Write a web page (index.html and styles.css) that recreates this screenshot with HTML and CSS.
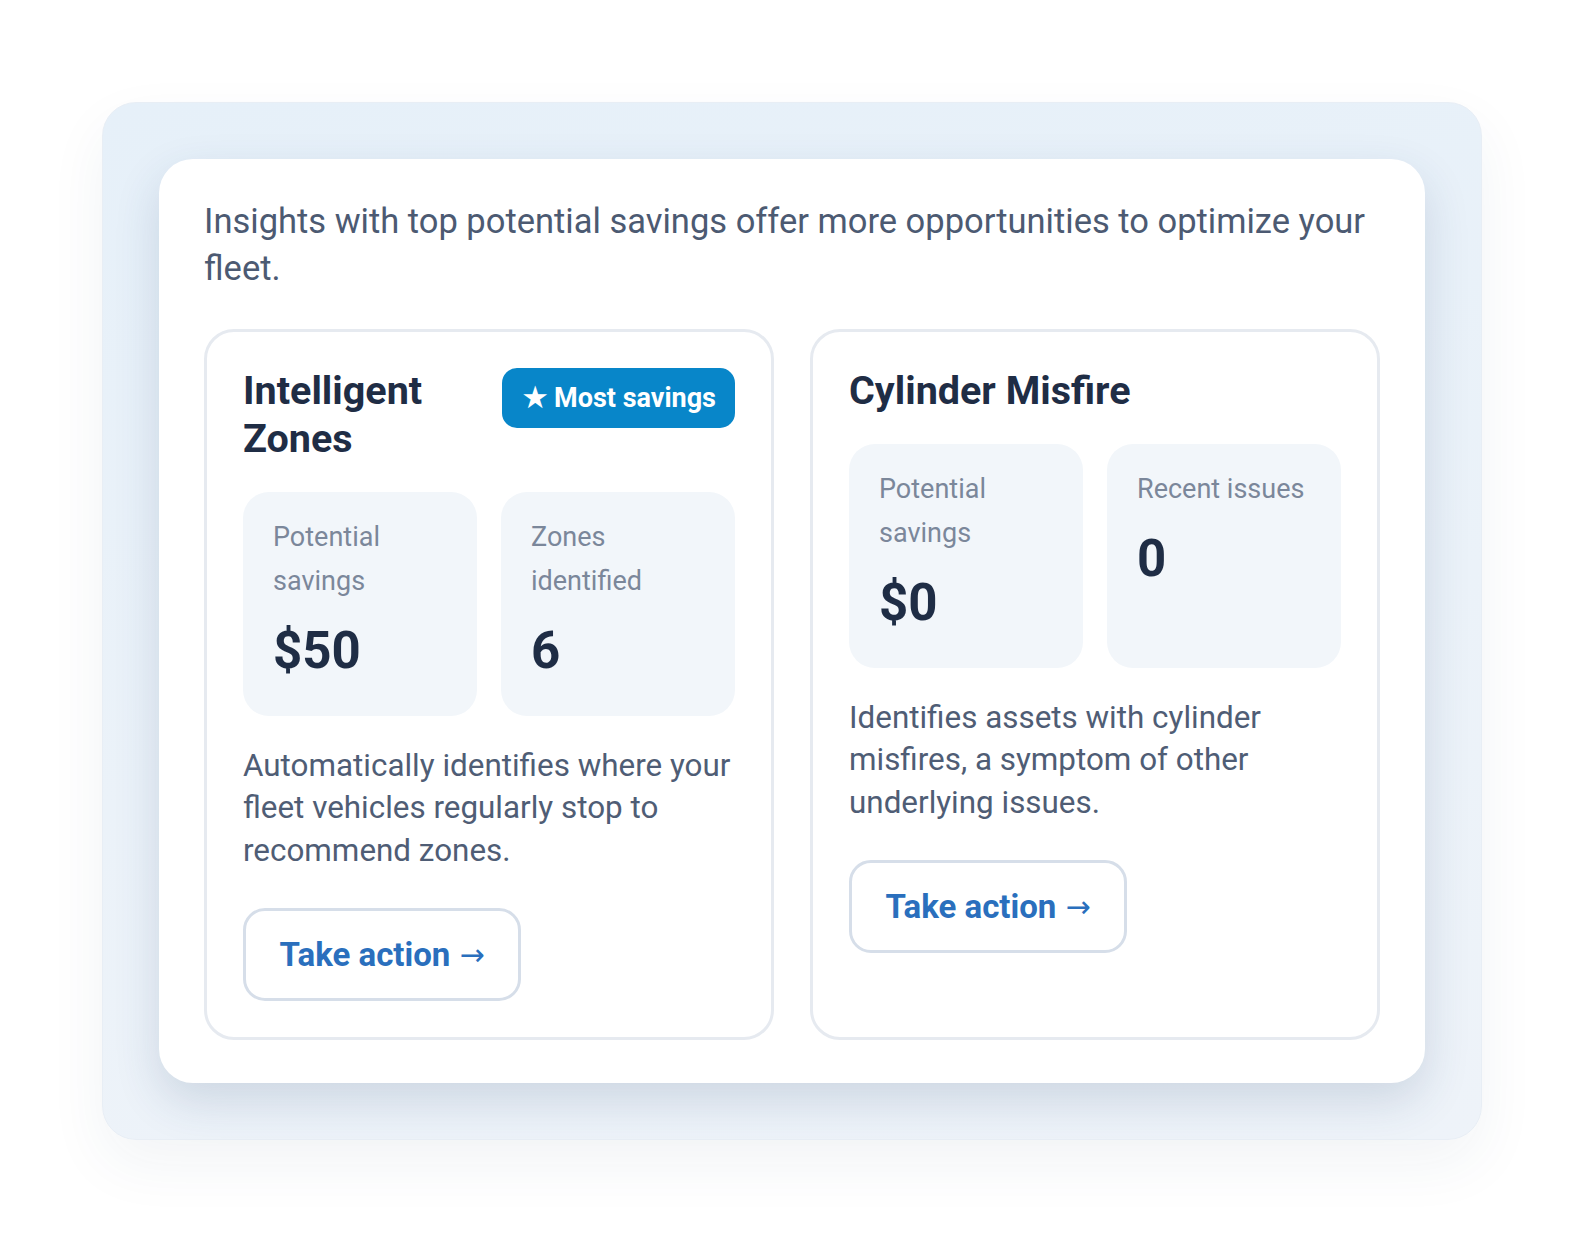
FILE: index.html
```html
<!DOCTYPE html>
<html lang="en">
<head>
  <meta charset="UTF-8" />
  <meta name="viewport" content="width=device-width, initial-scale=1.0" />
  <title>Fleet insights</title>
  <link rel="stylesheet" href="styles.css">
</head>
<body>
  <div class="frame">
    <section class="panel">
      <p class="intro">Insights with top potential savings offer more opportunities to optimize your fleet.</p>

      <div class="insights">
        <article class="insight">
          <div class="insight-head">
            <h2>Intelligent Zones</h2>
            <span class="badge"><span class="star">★</span> Most savings</span>
          </div>
          <div class="stats">
            <div class="stat">
              <div class="stat-label">Potential savings</div>
              <div class="stat-value">$50</div>
            </div>
            <div class="stat">
              <div class="stat-label">Zones identified</div>
              <div class="stat-value">6</div>
            </div>
          </div>
          <p class="desc">Automatically identifies where your fleet vehicles regularly stop to recommend zones.</p>
          <a class="action" href="#">Take action <span class="arrow">→</span></a>
        </article>

        <article class="insight">
          <div class="insight-head">
            <h2>Cylinder Misfire</h2>
          </div>
          <div class="stats">
            <div class="stat">
              <div class="stat-label">Potential savings</div>
              <div class="stat-value">$0</div>
            </div>
            <div class="stat">
              <div class="stat-label">Recent issues</div>
              <div class="stat-value">0</div>
            </div>
          </div>
          <p class="desc">Identifies assets with cylinder misfires, a symptom of other underlying issues.</p>
          <a class="action" href="#">Take action <span class="arrow">→</span></a>
        </article>
      </div>
    </section>
  </div>
</body>
</html>
```

FILE: styles.css
```css
body {
  margin: 0;
  min-height: 100vh;
  display: flex;
  align-items: center;
  justify-content: center;
  background: #fff;
  font-family: Roboto, "Noto Sans", Arial, sans-serif;
}

/* soft blue backdrop around the card */
.frame {
  width: 1380px;
  box-sizing: border-box;
  padding: 56px;
  border: 1px solid #e8eef5;
  border-radius: 34px;
  background: linear-gradient(170deg, #e6f0f9 0%, #ebf2f9 55%, #eef3f9 100%);
  box-shadow: 0 24px 60px rgba(40, 70, 110, 0.06);
}

.panel {
  background: #fff;
  border-radius: 34px;
  padding: 39px 45px 43px;
  box-shadow: 0 18px 46px rgba(35, 70, 115, 0.16);
}

.intro {
  margin: 0 0 36px;
  font-size: 34.5px;
  line-height: 47.5px;
  color: #4c5a72;
}

.insights {
  display: grid;
  grid-template-columns: 1fr 1fr;
  gap: 36px;
}

.insight {
  border: 3px solid #e6eaf0;
  border-radius: 30px;
  padding: 35px 36px 36px;
  display: flex;
  flex-direction: column;
  align-items: flex-start;
}

.insight-head {
  align-self: stretch;
  display: flex;
  justify-content: space-between;
  align-items: flex-start;
  gap: 20px;
}

.insight-head h2 {
  margin: 0;
  font-size: 39.5px;
  line-height: 48px;
  font-weight: 700;
  color: #1f2d45;
}

.badge {
  flex-shrink: 0;
  margin-top: 1px;
  padding: 0 19px;
  height: 60px;
  display: flex;
  align-items: center;
  gap: 5px;
  border-radius: 15px;
  background: #0886c9;
  color: #fff;
  font-size: 27px;
  font-weight: 700;
}

.star {
  font-family: "DejaVu Sans", sans-serif;
  font-size: 31px;
  line-height: 1;
}

.stats {
  align-self: stretch;
  display: grid;
  grid-template-columns: 1fr 1fr;
  gap: 24px;
  margin-top: 29px;
}

.stat {
  background: #f2f6fa;
  border-radius: 26px;
  padding: 23px 30px 30px;
  min-height: 171px;
}

.stat-label {
  font-size: 27px;
  line-height: 44px;
  color: #7b879a;
}

.stat-value {
  margin-top: 18px;
  font-size: 51px;
  line-height: 60px;
  font-weight: 700;
  color: #1f2d45;
}

.desc {
  margin: 29px 0 0;
  font-size: 31.4px;
  line-height: 42.5px;
  color: #4f5d75;
}

.action {
  margin-top: 36px;
  box-sizing: border-box;
  width: 278px;
  height: 93px;
  display: flex;
  align-items: center;
  justify-content: center;
  gap: 9px;
  border: 3px solid #d6dee9;
  border-radius: 22px;
  color: #2a6fbd;
  font-size: 33px;
  font-weight: 700;
  text-decoration: none;
}

.arrow {
  font-family: "DejaVu Sans", sans-serif;
  font-weight: 400;
  font-size: 30px;
}
```
